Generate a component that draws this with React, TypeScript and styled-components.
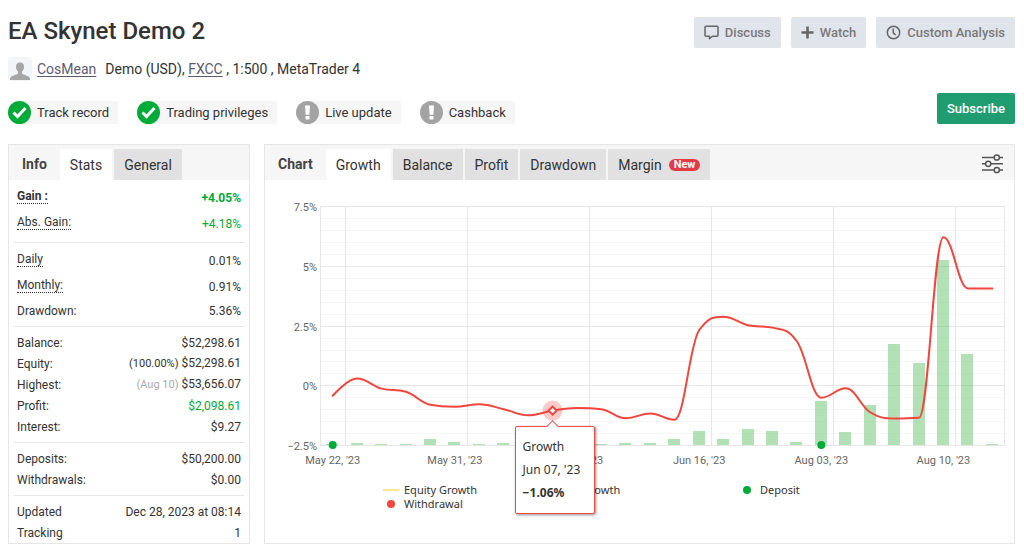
import React from "react";
import styled, { createGlobalStyle, css } from "styled-components";

const GlobalStyle = createGlobalStyle`
  *, *::before, *::after { box-sizing: border-box; }
  body {
    margin: 0;
    background: #fff;
    color: #333;
    font-family: Roboto, "Liberation Sans", sans-serif;
    font-size: 14px;
  }
`;

const chartFont = `"Noto Sans", "Open Sans", sans-serif`;

/* ---------- page header ---------- */

const Page = styled.div`
  padding: 17px 9px 16px 8px;
`;

const HeaderRow = styled.header`
  display: flex;
  align-items: center;
  justify-content: space-between;
  min-height: 31px;
`;

const Title = styled.h1`
  margin: 0;
  padding-bottom: 3px;
  font-size: 24px;
  line-height: 27px;
  font-weight: 500;
`;

const Actions = styled.div`
  display: flex;
  gap: 10px;
`;

const Button = styled.button<{ $primary?: boolean }>`
  display: flex;
  align-items: center;
  gap: 6px;
  height: 31px;
  padding: 0 10px;
  border: 0;
  border-radius: 2px;
  font: 500 13px/16px Roboto, "Liberation Sans", sans-serif;
  background: ${(p) => (p.$primary ? "#1f9d70" : "#e0e4eb")};
  color: ${(p) => (p.$primary ? "#fff" : "#7a7a7a")};
  cursor: pointer;

  svg { color: #666; }
`;

const AccountRow = styled.div`
  display: flex;
  align-items: center;
  margin-top: 9px;
  font-size: 14px;
  line-height: 24px;
`;

const Avatar = styled.span`
  display: flex;
  width: 24px;
  height: 24px;
  margin-right: 5px;
  border-radius: 4px;
  background: #f3f4f7;
`;

const AccountDetails = styled.span`
  margin-left: 9px;
`;

const Link = styled.a`
  color: #5d5b73;
  text-decoration: underline;
  text-underline-offset: 2px;
`;

const StatusRow = styled.div`
  display: flex;
  align-items: flex-end;
  justify-content: space-between;
  margin-top: 12px;
`;

const Chips = styled.div`
  display: flex;
  gap: 19px;
`;

const Chip = styled.span`
  display: flex;
  align-items: center;
  gap: 6px;
  height: 23px;
  padding-right: 9px;
  border-radius: 12px 2px 2px 12px;
  background: #f6f6f6;
  font-size: 13px;
`;

/* ---------- panels ---------- */

const Panels = styled.main`
  display: grid;
  grid-template-columns: 242px minmax(0, 1fr);
  gap: 14px;
  margin-top: 20px;
`;

const Panel = styled.section`
  border: 1px solid #e6e6e6;
  background: #fff;
`;

const PanelHeader = styled.div`
  display: flex;
  align-items: flex-end;
  height: 35px;
  background: #f6f6f6;
`;

const PanelTitle = styled.h2`
  margin: 0;
  padding: 0 13px;
  font-size: 14px;
  line-height: 31px;
  font-weight: 700;
  color: #444;
`;

const Tabs = styled.div`
  display: flex;
  gap: 2px;
`;

const Tab = styled.button<{ $active?: boolean }>`
  display: flex;
  align-items: center;
  gap: 7px;
  height: 31px;
  padding: 0 10px;
  border: 0;
  font: 400 14px/16px Roboto, "Liberation Sans", sans-serif;
  color: #333;
  background: #e1e1e1;
  cursor: pointer;
  ${(p) => p.$active && css`background: #fff;`}
`;

const NewBadge = styled.span`
  padding: 0 5px;
  border-radius: 6px;
  background: #e63946;
  color: #fff;
  font-size: 11px;
  line-height: 12px;
  font-weight: 700;
`;

const IconButton = styled.button`
  display: flex;
  margin: 0 11px 6px auto;
  padding: 0;
  border: 0;
  background: none;
  color: #555;
  cursor: pointer;
`;

/* ---------- stats list ---------- */

const Group = styled.dl`
  margin: 0 5px;
  padding: 5px 3px;

  & + & { border-top: 1px solid #e8e8e8; }
  &:last-child { padding-bottom: 0; }
`;

const Row = styled.div<{ $tall?: boolean }>`
  display: flex;
  align-items: center;
  justify-content: space-between;
  height: ${(p) => (p.$tall ? 26 : 21)}px;
  font-size: 12px;
  line-height: 14px;
`;

const Label = styled.dt<{ $hint?: boolean; $strong?: boolean }>`
  font-weight: ${(p) => (p.$strong ? 700 : 400)};
  ${(p) => p.$hint && css`
    margin-bottom: 3px;
    border-bottom: 1px dotted #333;
  `}
`;

const Value = styled.dd<{ $positive?: boolean; $strong?: boolean }>`
  margin: 0;
  font-weight: ${(p) => (p.$strong ? 700 : 400)};
  color: ${(p) => (p.$positive ? "#00ab37" : "inherit")};
`;

const Note = styled.span<{ $muted?: boolean }>`
  margin-right: 3px;
  font-size: 11px;
  color: ${(p) => (p.$muted ? "#aaa" : "inherit")};
`;

/* ---------- chart ---------- */

const ChartArea = styled.div`
  position: relative;

  > svg { display: block; width: 100%; height: auto; }
`;

const AxisText = styled.text`
  font: 11px Roboto, "Liberation Sans", sans-serif;
  fill: #666;
`;

const Legend = styled.ul`
  display: grid;
  grid-template-columns: repeat(3, 178px);
  margin: 14px 0 0 118px;
  padding: 0;
  list-style: none;
  font-family: ${chartFont};
  font-size: 11px;
  line-height: 14px;
`;

const LegendItem = styled.li`
  display: flex;
  align-items: center;
  gap: 5px;
`;

const Marker = styled.span<{ $color: string; $line?: boolean }>`
  width: ${(p) => (p.$line ? 16 : 8)}px;
  height: ${(p) => (p.$line ? 2 : 8)}px;
  margin: 0 ${(p) => (p.$line ? 0 : 4)}px;
  border-radius: ${(p) => (p.$line ? 0 : 4)}px;
  background: ${(p) => p.$color};
`;

const Tooltip = styled.div`
  position: absolute;
  z-index: 1;
  width: 80px;
  margin: 15px 0 0 -38px;
  padding: 8px 7px 9px;
  border: 1px solid #ee4b46;
  border-radius: 2px;
  background: #fff;
  box-shadow: 1px 1px 3px rgba(0, 0, 0, 0.45);
  font-family: ${chartFont};
  font-size: 12px;
  line-height: 23px;
  white-space: nowrap;

  &::before {
    content: "";
    position: absolute;
    top: -5px;
    left: 32px;
    width: 9px;
    height: 9px;
    border: solid #ee4b46;
    border-width: 1px 0 0 1px;
    background: #fff;
    transform: rotate(45deg);
  }

  p { margin: 0; }
`;

const VIEW = { width: 749, height: 289 };
const PLOT = { left: 55, right: 739, top: 26, bottom: 265 };
const RANGE = { min: -2.5, max: 7.5 };

const growth = [
  -0.44, 0.28, -0.14, -0.27, -0.82, -0.9, -0.8, -1.0, -1.26, -1.06, -0.95, -1.0, -1.38, -1.18,
  -1.44, 2.3, 2.87, 2.51, 2.41, 1.84, -0.52, -0.13, -1.13, -1.39, -1.36, 6.19, 4.05, 4.05,
];
const volume = [
  1, 2, 1, 1, 6, 3, 1, 2, 1, 1, 1, 1, 2, 2, 6, 14, 6, 16, 14, 3, 44, 13, 40, 101, 82, 185, 91, 1,
];
const deposits = [0, 20];
const dates = ["May 22, '23", "May 31, '23", "Jun 08, '23", "Jun 16, '23", "Aug 03, '23", "Aug 10, '23"];
const ticks = [7.5, 5, 2.5, 0, -2.5];
const SELECTED = 9;

const step = (PLOT.right - PLOT.left) / growth.length;
const xAt = (i: number) => PLOT.left + 0.5 + step * (i + 0.5);
const yAt = (v: number) =>
  PLOT.top + ((RANGE.max - v) / (RANGE.max - RANGE.min)) * (PLOT.bottom - PLOT.top);
const crisp = (n: number) => Math.round(n + 0.1) + 0.5;

type Point = { x: number; y: number };

/* Smooth curve whose control points never overshoot a local extreme. */
function splinePath(points: Point[]) {
  const smoothing = 1.5;
  const denom = smoothing + 1;
  let prevRight: Point = points[0];
  let d = `M${points[0].x} ${points[0].y}`;
  for (let i = 1; i < points.length; i++) {
    const last = points[i - 1];
    const p = points[i];
    const next = points[i + 1];
    let left: Point = p;
    let right: Point = p;
    if (next) {
      const lx = (smoothing * p.x + last.x) / denom;
      let ly = (smoothing * p.y + last.y) / denom;
      const rx = (smoothing * p.x + next.x) / denom;
      let ry = (smoothing * p.y + next.y) / denom;
      const fix = ((ry - ly) * (rx - p.x)) / (rx - lx) + p.y - ry;
      ly += fix;
      ry += fix;
      if (ly > last.y && ly > p.y) {
        ly = Math.max(last.y, p.y);
        ry = 2 * p.y - ly;
      } else if (ly < last.y && ly < p.y) {
        ly = Math.min(last.y, p.y);
        ry = 2 * p.y - ly;
      }
      if (ry > next.y && ry > p.y) {
        ry = Math.max(next.y, p.y);
        ly = 2 * p.y - ry;
      } else if (ry < next.y && ry < p.y) {
        ry = Math.min(next.y, p.y);
        ly = 2 * p.y - ry;
      }
      left = { x: lx, y: ly };
      right = { x: rx, y: ry };
    }
    d += `C${prevRight.x} ${prevRight.y} ${left.x} ${left.y} ${p.x} ${p.y}`;
    prevRight = right;
  }
  return d;
}

function GrowthChart() {
  const points = growth.map((v, i) => ({ x: xAt(i), y: yAt(v) }));
  const sel = points[SELECTED];
  return (
    <ChartArea>
      <svg viewBox={`0 0 ${VIEW.width} ${VIEW.height}`} role="img" aria-label="Growth chart">
        {Array.from({ length: 21 }, (_, i) => {
          const y = crisp(yAt(RANGE.max - i * 0.5));
          return (
            <line key={i} x1={PLOT.left} x2={PLOT.right} y1={y} y2={y} stroke={i % 5 ? "#f6f6f6" : "#e6e6e6"} />
          );
        })}
        {dates.map((date, i) => {
          const x = crisp(PLOT.left + step * (1 + i * 5));
          return <line key={date} x1={x} x2={x} y1={PLOT.top} y2={PLOT.bottom} stroke="#e6e6e6" />;
        })}
        <rect
          x={PLOT.left + 0.5}
          y={PLOT.top + 0.5}
          width={PLOT.right - PLOT.left}
          height={PLOT.bottom - PLOT.top}
          fill="none"
          stroke="#e6e6e6"
        />
        {volume.map((h, i) => (
          <rect key={i} x={Math.floor(xAt(i)) - 6} y={PLOT.bottom - h} width="12" height={h} fill="#68c46e" opacity="0.5" />
        ))}
        <path d={splinePath(points)} fill="none" stroke="#f2453d" strokeWidth="2" strokeLinecap="round" strokeLinejoin="round" />
        {deposits.map((i) => (
          <circle key={i} cx={xAt(i)} cy={PLOT.bottom} r="4" fill="#00ab37" />
        ))}
        <circle cx={sel.x} cy={sel.y} r="10" fill="#f2453d" opacity="0.28" />
        <path d={`M${sel.x} ${sel.y - 4}l4 4l-4 4l-4 -4z`} fill="#fff" stroke="#f2453d" strokeWidth="2" />
        {ticks.map((t) => (
          <AxisText key={t} x={PLOT.left - 3} y={yAt(t) + 5} textAnchor="end">
            {`${t < 0 ? "−" : ""}${Math.abs(t)}%`}
          </AxisText>
        ))}
        {dates.map((date, i) => (
          <AxisText key={date} x={xAt(i * 5)} y={PLOT.bottom + 19} textAnchor="middle">
            {date}
          </AxisText>
        ))}
      </svg>
      <Tooltip style={{ left: `${(sel.x / VIEW.width) * 100}%`, top: `${(sel.y / VIEW.height) * 100}%` }}>
        <p>Growth</p>
        <p>Jun 07, '23</p>
        <p><b>−1.06%</b></p>
      </Tooltip>
    </ChartArea>
  );
}

/* ---------- icons ---------- */

const CheckIcon = () => (
  <svg width="23" height="23" viewBox="0 0 23 23" aria-hidden="true">
    <circle cx="11.5" cy="11.5" r="11.5" fill="#00ab37" />
    <path d="M5.5 11.5l4 4l8 -8.5" fill="none" stroke="#fff" strokeWidth="3" />
  </svg>
);

const AlertIcon = () => (
  <svg width="23" height="23" viewBox="0 0 23 23" aria-hidden="true">
    <circle cx="11.5" cy="11.5" r="11.5" fill="#a3a3a3" />
    <path d="M9 4.500h5l-.6 9.300h-3.800z" fill="#fff" />
    <rect x="9.400" y="15" width="4.200" height="3.600" rx="1" fill="#fff" />
  </svg>
);

const UserIcon = () => (
  <svg width="24" height="24" viewBox="0 0 24 24" fill="#a6a6a6" aria-hidden="true">
    <path d="M12 5.500c-2.700 0-4.200 1.800-4 4.400c.1 2 .9 3.600 2 4.600v2c-.8 1.400-6.500 1.900-7.700 4.200q-.4.900-.3 2.300h20q.1-1.400-.3-2.300c-1.200-2.300-6.900-2.800-7.700-4.200v-2c1.100-1 1.900-2.600 2-4.600c.2-2.600-1.300-4.400-4-4.400z" />
  </svg>
);

const DiscussIcon = () => (
  <svg width="15" height="15" viewBox="0 0 15 15" fill="none" stroke="currentColor" strokeWidth="1.500" strokeLinejoin="round" aria-hidden="true">
    <path d="M2 1.200h11a1 1 0 0 1 1 1v8a1 1 0 0 1-1 1H8.500L5.500 13.800V11.200H2a1 1 0 0 1-1-1v-8a1 1 0 0 1 1-1z" />
  </svg>
);

const PlusIcon = () => (
  <svg width="13" height="13" viewBox="0 0 13 13" aria-hidden="true">
    <path d="M6.500 .500v12M.500 6.500h12" stroke="currentColor" strokeWidth="2.600" />
  </svg>
);

const ClockIcon = () => (
  <svg width="15" height="15" viewBox="0 0 15 15" fill="none" stroke="currentColor" strokeWidth="1.500" aria-hidden="true">
    <circle cx="7.500" cy="7.500" r="6.200" />
    <path d="M7.200 3.500v4.300l2.500 2" />
  </svg>
);

const SlidersIcon = () => (
  <svg width="21" height="20" viewBox="0 0 21 20" stroke="currentColor" strokeWidth="1.500" aria-hidden="true">
    <path d="M0 3.500h21M0 9.800h21M0 16h21" />
    <g fill="#f6f6f6">
      <circle cx="14.800" cy="3.500" r="2.600" />
      <circle cx="6.200" cy="9.800" r="2.600" />
      <circle cx="14.800" cy="16" r="2.600" />
    </g>
  </svg>
);

/* ---------- data ---------- */

type Stat = {
  label: string;
  value: string;
  hint?: boolean;
  tall?: boolean;
  strong?: boolean;
  positive?: boolean;
  note?: string;
  mutedNote?: boolean;
};

const stats: Stat[][] = [
  [
    { label: "Gain :", value: "+4.05%", hint: true, tall: true, strong: true, positive: true },
    { label: "Abs. Gain:", value: "+4.18%", hint: true, tall: true, positive: true },
  ],
  [
    { label: "Daily", value: "0.01%", hint: true, tall: true },
    { label: "Monthly:", value: "0.91%", hint: true, tall: true },
    { label: "Drawdown:", value: "5.36%" },
  ],
  [
    { label: "Balance:", value: "$52,298.61" },
    { label: "Equity:", value: "$52,298.61", note: "(100.00%)" },
    { label: "Highest:", value: "$53,656.07", note: "(Aug 10)", mutedNote: true },
    { label: "Profit:", value: "$2,098.61", positive: true },
    { label: "Interest:", value: "$9.27" },
  ],
  [
    { label: "Deposits:", value: "$50,200.00" },
    { label: "Withdrawals:", value: "$0.00" },
  ],
  [
    { label: "Updated", value: "Dec 28, 2023 at 08:14" },
    { label: "Tracking", value: "1" },
  ],
];

const statuses = [
  { label: "Track record", ok: true },
  { label: "Trading privileges", ok: true },
  { label: "Live update", ok: false },
  { label: "Cashback", ok: false },
];

const chartTabs = ["Growth", "Balance", "Profit", "Drawdown", "Margin"];

export default function App() {
  return (
    <Page>
      <GlobalStyle />
      <HeaderRow>
        <Title>EA Skynet Demo 2</Title>
        <Actions>
          <Button type="button"><DiscussIcon />Discuss</Button>
          <Button type="button"><PlusIcon />Watch</Button>
          <Button type="button"><ClockIcon />Custom Analysis</Button>
        </Actions>
      </HeaderRow>
      <AccountRow>
        <Avatar><UserIcon /></Avatar>
        <Link href="#member">CosMean</Link>
        <AccountDetails>
          Demo (USD), <Link href="#broker">FXCC</Link> , 1:500 , MetaTrader 4
        </AccountDetails>
      </AccountRow>
      <StatusRow>
        <Chips>
          {statuses.map((s) => (
            <Chip key={s.label}>
              {s.ok ? <CheckIcon /> : <AlertIcon />}
              {s.label}
            </Chip>
          ))}
        </Chips>
        <Button type="button" $primary>Subscribe</Button>
      </StatusRow>

      <Panels>
        <Panel>
          <PanelHeader>
            <PanelTitle>Info</PanelTitle>
            <Tabs role="tablist">
              <Tab type="button" role="tab" aria-selected="true" $active>Stats</Tab>
              <Tab type="button" role="tab" aria-selected="false">General</Tab>
            </Tabs>
          </PanelHeader>
          {stats.map((group) => (
            <Group key={group[0].label}>
              {group.map((s) => (
                <Row key={s.label} $tall={s.tall}>
                  <Label $hint={s.hint} $strong={s.strong}>{s.label}</Label>
                  <Value $positive={s.positive} $strong={s.strong}>
                    {s.note && <Note $muted={s.mutedNote}>{s.note}</Note>}
                    {s.value}
                  </Value>
                </Row>
              ))}
            </Group>
          ))}
        </Panel>

        <Panel>
          <PanelHeader>
            <PanelTitle>Chart</PanelTitle>
            <Tabs role="tablist">
              {chartTabs.map((t, i) => (
                <Tab key={t} type="button" role="tab" aria-selected={i === 0} $active={i === 0}>
                  {t}
                  {t === "Margin" && <NewBadge>New</NewBadge>}
                </Tab>
              ))}
            </Tabs>
            <IconButton type="button" aria-label="Chart settings"><SlidersIcon /></IconButton>
          </PanelHeader>
          <GrowthChart />
          <Legend>
            <LegendItem><Marker $line $color="#fde28f" />Equity Growth</LegendItem>
            <LegendItem><Marker $line $color="#f2453d" />Growth</LegendItem>
            <LegendItem><Marker $color="#00ab37" />Deposit</LegendItem>
            <LegendItem><Marker $color="#f2453d" />Withdrawal</LegendItem>
          </Legend>
        </Panel>
      </Panels>
    </Page>
  );
}
